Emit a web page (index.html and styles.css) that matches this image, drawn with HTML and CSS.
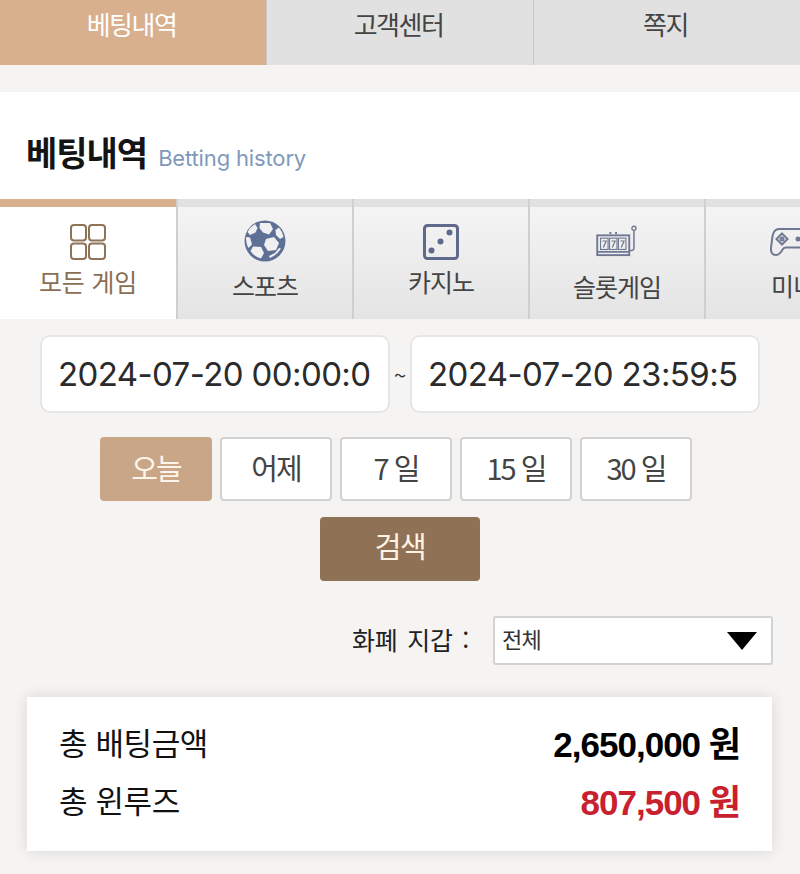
FILE: index.html
```html
<!DOCTYPE html>
<html lang="ko">
<head>
<meta charset="utf-8">
<title>베팅내역</title>
<link rel="stylesheet" href="styles.css">
</head>
<body>
<nav class="top-tabs">
  <a class="top-tab is-active">베팅내역</a>
  <a class="top-tab">고객센터</a>
  <a class="top-tab">쪽지</a>
</nav>
<header class="title-bar">
  <h1 class="title">베팅내역</h1>
  <span class="subtitle">Betting history</span>
</header>
<div class="game-tabs">
  <a class="game-tab is-active">
    <svg class="icon icon-all" viewBox="0 0 36 36"><g fill="none" stroke="#8f7358" stroke-width="2"><rect x="1" y="1" width="15" height="15.500" rx="3"/><rect x="19" y="1" width="16" height="15.500" rx="3"/><rect x="1" y="19.500" width="15" height="15.500" rx="3"/><rect x="19" y="19.500" width="16" height="15.500" rx="3"/></g></svg>
    <span class="game-label label-all">모든 게임</span>
  </a>
  <a class="game-tab">
    <svg class="icon icon-ball" viewBox="0 0 42 42">
      <circle cx="21" cy="21" r="20.500" fill="#5f7096"/>
      <g fill="#f0f0f1">
        <path d="M16 3 H26 L29 9 L25 14.500 L19 12.500 L15.500 8Z"/>
        <path d="M11 4 L13.500 8 L11.500 12.500 L6 15 L3.500 12 Q6 7 11 4Z"/>
        <path d="M2 17 L6 17.500 L8 24.500 L4.500 28 Q2 24 2 17Z"/>
        <path d="M9 26.500 L17 27 L20 33 L17 38.500 Q10 36.500 6.500 31Z"/>
        <path d="M22 19 L30 17 L35 23 L32 30 L24 31 L20 25Z"/>
        <path d="M31.500 10 L35 7.500 Q38.500 11.500 39.500 17 L36 19 L32 15Z"/>
        <path d="M35 28 L37 28.500 Q33 35 26 38 L25 36 L31 33Z"/>
      </g>
    </svg>
    <span class="game-label label-ball">스포츠</span>
  </a>
  <a class="game-tab">
    <svg class="icon icon-dice" viewBox="0 0 36 36">
      <rect x="1.500" y="1.500" width="33" height="33" rx="3" fill="none" stroke="#60688c" stroke-width="3"/>
      <circle cx="26.500" cy="8.500" r="3" fill="#60688c"/>
      <circle cx="17.500" cy="17.500" r="3" fill="#60688c"/>
      <circle cx="8.500" cy="26.500" r="3" fill="#60688c"/>
    </svg>
    <span class="game-label label-dice">카지노</span>
  </a>
  <a class="game-tab">
    <svg class="icon icon-slot" viewBox="0 0 44 34">
      <g fill="none" stroke="#6f7892">
        <rect x="1" y="11" width="34" height="21" stroke-width="2"/>
        <path d="M1 28.500 H35 M14 8.500 H16 M20 8.500 H22" stroke-width="2"/>
        <rect x="4.500" y="14" width="8" height="12" stroke-width="1.200"/>
        <rect x="14" y="14" width="8" height="12" stroke-width="1.200"/>
        <rect x="23.500" y="14" width="8" height="12" stroke-width="1.200"/>
        <path d="M6.500 17 H10.500 L7.500 24 M16 17 H20 L17 24 M25.500 17 H29.500 L26.500 24" stroke-width="1.300"/>
        <path d="M35 27 H37.500 Q40 27 40 24.500 V6" stroke-width="1.600"/>
        <circle cx="40" cy="3.500" r="2.200" stroke-width="1.400"/>
      </g>
    </svg>
    <span class="game-label label-slot">슬롯게임</span>
  </a>
  <a class="game-tab">
    <svg class="icon icon-pad" viewBox="0 0 46 30">
      <g fill="none" stroke="#6f7892" stroke-width="2">
        <path d="M9 2 H37 Q42 2 43.500 9 L45 21 Q45.500 28 40 28 Q36.500 28 33 22 Q32 20.500 30 20.500 H16 Q14 20.500 13 22 Q9.500 28 6 28 Q0.500 28 1 21 L2.500 9 Q4 2 9 2Z"/>
        <path d="M12 6.500 L17.500 12 L12 17.500 L6.500 12Z"/>
        <circle cx="12" cy="12" r="1.500"/>
        <circle cx="28" cy="12" r="1.500" fill="#6f7892"/>
        <circle cx="34" cy="12" r="1.500" fill="#6f7892"/>
      </g>
    </svg>
    <span class="game-label label-pad">미니</span>
  </a>
</div>
<main class="content">
  <div class="date-row">
    <div class="date-field">2024-07-20 00:00:0</div>
    <span class="tilde">~</span>
    <div class="date-field">2024-07-20 23:59:5</div>
  </div>
  <div class="range-row">
    <button class="range-btn is-active">오늘</button>
    <button class="range-btn">어제</button>
    <button class="range-btn">7 일</button>
    <button class="range-btn">15 일</button>
    <button class="range-btn">30 일</button>
  </div>
  <button class="search-btn">검색</button>
  <div class="wallet-row">
    <span class="wallet-label">화폐 지갑 :</span>
    <div class="wallet-select"><span class="wallet-value">전체</span><i class="arrow"></i></div>
  </div>
  <section class="summary">
    <div class="summary-row"><span>총 배팅금액</span><strong class="amount">2,650,000 원</strong></div>
    <div class="summary-row"><span>총 윈루즈</span><strong class="amount amount-loss">807,500 원</strong></div>
  </section>
</main>
</body>
</html>
```

FILE: styles.css
```css
* { box-sizing: border-box; }
html, body { margin: 0; padding: 0; }
body {
  width: 800px;
  height: 874px;
  overflow: hidden;
  background: #f5f4f2;
  font-family: "Noto Sans CJK KR", "Inter", sans-serif;
  color: #222;
}
button { font-family: inherit; padding: 0; cursor: pointer; }

.top-tabs { display: flex; gap: 1px; height: 65px; background: #c9c9c9; }
.top-tab {
  flex: 1;
  padding-right: 3px;
  background: #e1e1e1;
  color: #444;
  font-size: 26px;
  letter-spacing: -1.500px;
  text-align: center;
  line-height: 47px;
}
.top-tab.is-active { background: #d8b08e; color: #fff; }

.title-bar {
  display: flex;
  align-items: baseline;
  gap: 11px;
  height: 107px;
  margin-top: 27px;
  padding: 37px 26px 0;
  background: #fff;
}
.title { margin: 0; font-size: 34px; font-weight: 700; letter-spacing: -1px; color: #141414; line-height: 46px; }
.subtitle { font-family: "Inter", sans-serif; font-size: 22px; color: #7f99ba; letter-spacing: -0.150px; }

.game-tabs { display: flex; gap: 2px; height: 120px; overflow: hidden; background: #cfcfcf; }
.game-tab {
  flex: 0 0 174px;
  display: flex;
  flex-direction: column;
  align-items: center;
  border-top: 8px solid #e1e1e1;
  background: linear-gradient(#f4f4f4, #e4e4e4);
  color: #444;
}
.game-tab.is-active { flex-basis: 176px; border-top-color: #d8b08e; background: #fff; color: #8a6f55; }
.game-label { font-size: 25px; letter-spacing: -1px; line-height: 36px; white-space: nowrap; }
.icon { display: block; flex: none; }
.icon-all { width: 36px; height: 36px; margin-top: 17px; }
.icon-ball { width: 42px; height: 42px; margin-top: 13px; }
.icon-dice { width: 36px; height: 36px; margin-top: 17px; }
.icon-slot { width: 42px; height: 32px; margin-top: 18px; }
.icon-pad { width: 46px; height: 30px; margin-top: 20px; }
.label-all { margin-top: 3px; letter-spacing: -0.200px; }
.label-dice { margin-top: 3px; }
.label-ball { margin-top: 5px; }
.label-slot { margin-top: 11px; }
.label-pad { margin-top: 10px; }

.content { display: flex; flex-direction: column; align-items: center; padding-top: 16px; }
.date-row { display: flex; align-items: center; gap: 4px; }
.date-field {
  width: 350px;
  height: 78px;
  padding-left: 16px;
  background: #fff;
  border: 2px solid #e6e6e6;
  border-radius: 10px;
  font-family: "Inter", sans-serif;
  font-size: 33px;
  letter-spacing: -0.600px;
  line-height: 74px;
  color: #2b2b2b;
  white-space: nowrap;
}
.tilde { width: 12px; font-size: 22px; text-align: center; color: #333; }

.range-row { display: flex; gap: 8px; margin-top: 24px; margin-right: 8px; }
.range-btn {
  width: 112px;
  height: 64px;
  background: #fff;
  border: 2px solid #d2d2d2;
  border-radius: 4px;
  color: #444;
  font-size: 29px;
  letter-spacing: -2px;
  line-height: 56px;
  padding-bottom: 9px;
}
.range-btn.is-active { background: #c9a688; border-color: #c9a688; color: #fdf5ea; }

.search-btn {
  width: 160px;
  height: 64px;
  margin-top: 16px;
  border: 0;
  border-radius: 4px;
  background: #8f7155;
  color: #fff3e3;
  font-size: 29px;
  letter-spacing: -1.500px;
  padding-bottom: 8px;
}

.wallet-row { align-self: stretch; display: flex; justify-content: flex-end; align-items: center; gap: 24px; margin-top: 35px; padding-right: 27px; }
.wallet-label { position: relative; top: -2px; font-size: 25px; letter-spacing: -0.300px; word-spacing: 3px; color: #222; }
.wallet-select {
  width: 280px;
  height: 49px;
  display: flex;
  align-items: center;
  justify-content: space-between;
  padding: 0 14px 0 7px;
  background: #fff;
  border: 2px solid #d2d2d2;
  border-radius: 3px;
  font-size: 22px;
  letter-spacing: -0.800px;
  color: #333;
}
.wallet-value { position: relative; top: -3px; }
.arrow { width: 0; height: 0; border-style: solid; border-width: 18px 15px 0; border-color: #000 transparent transparent; }

.summary {
  align-self: stretch;
  height: 154px;
  margin: 32px 28px 0 27px;
  padding: 15px 32px 0;
  background: #fff;
  box-shadow: 0 0 14px rgba(0, 0, 0, 0.12);
}
.summary-row {
  display: flex;
  justify-content: space-between;
  align-items: center;
  height: 58px;
  font-size: 31px;
  letter-spacing: -0.400px;
  color: #111;
}
.amount { font-family: "Liberation Sans", "Noto Sans CJK KR", sans-serif; font-size: 35px; font-weight: 700; letter-spacing: -1px; color: #000; }
.amount-loss { color: #c9202f; }
```
